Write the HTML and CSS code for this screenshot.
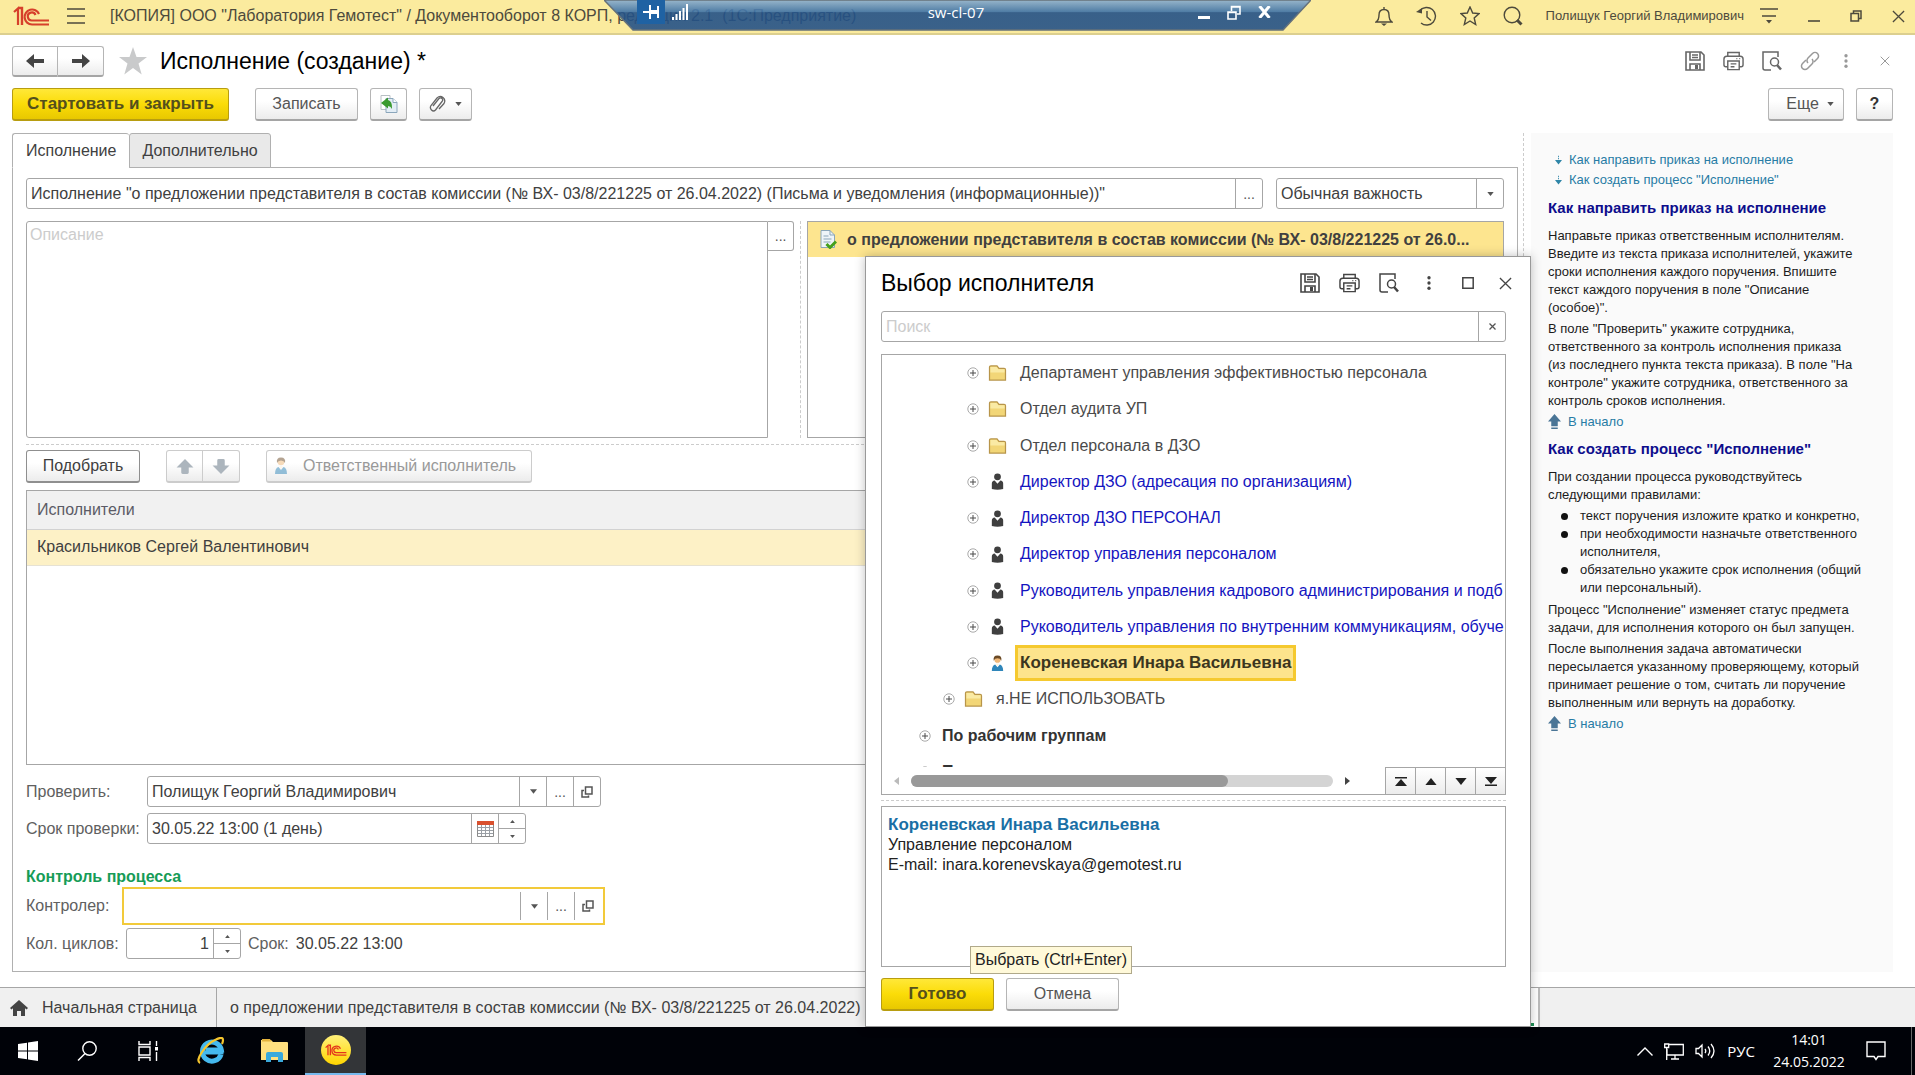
FILE: index.html
```html
<!DOCTYPE html>
<html lang="ru">
<head>
<meta charset="utf-8">
<title>Исполнение (создание)</title>
<link rel="stylesheet" href="styles.css">
</head>
<body>
<svg class="defs" aria-hidden="true">
  <symbol id="i-logo" viewBox="0 0 37 20"><g fill="none" stroke="currentColor"><path d="M1 6l4-3.500V19" stroke-width="2.200"/><path d="M6 2h3v17" stroke-width="2.400"/><path d="M26 8a7.500 7.500 0 1 0-7 10.500h17" stroke-width="2.200"/><path d="M22.500 9a4 4 0 1 0-3.500 5.500h17" stroke-width="2.200"/></g></symbol>
  <symbol id="i-save" viewBox="0 0 20 20"><g fill="none" stroke="currentColor" stroke-width="1.600"><path d="M1 1h15l3 3v15H1z"/><path d="M5 1v8h10V1M7 4h6M7 6.500h6M5 19v-6h10v6"/></g><path d="M10 14h3v4h-3z" fill="currentColor"/></symbol>
  <symbol id="i-print" viewBox="0 0 22 20"><g fill="none" stroke="currentColor" stroke-width="1.500"><path d="M5 5V1h12v4M5 16H3a2 2 0 0 1-2-2V8a3 3 0 0 1 3-3h14a3 3 0 0 1 3 3v6a2 2 0 0 1-2 2h-2"/><path d="M5 10h12v9H5zM8 13h6M8 16h4M14 7.500h1M17 7.500h1"/></g></symbol>
  <symbol id="i-preview" viewBox="0 0 20 20"><g fill="none" stroke="currentColor" stroke-width="1.500"><path d="M9 19H3a2 2 0 0 1-2-2V1h15v5"/><circle cx="12.500" cy="11" r="4"/></g><path d="M15 14l4 4.500" stroke="currentColor" stroke-width="2.500"/></symbol>
  <symbol id="i-link" viewBox="0 0 20 20"><g fill="none" stroke="currentColor" stroke-width="1.500"><path d="M8 12a3.500 3.500 0 0 1 0-5l4.500-4.500a3.500 3.500 0 0 1 5 5L14 11"/><path d="M12 8a3.500 3.500 0 0 1 0 5l-4.500 4.500a3.500 3.500 0 0 1-5-5L6 9"/></g></symbol>
  <symbol id="i-dots" viewBox="0 0 4 16"><g fill="currentColor"><circle cx="2" cy="2" r="1.900"/><circle cx="2" cy="8" r="1.900"/><circle cx="2" cy="14" r="1.900"/></g></symbol>
  <symbol id="i-x" viewBox="0 0 14 14"><path d="M1 1l12 12M13 1L1 13" fill="none" stroke="currentColor" stroke-width="1.400"/></symbol>
  <symbol id="i-down" viewBox="0 0 8 5"><path d="M0 0h8L4 5z" fill="currentColor"/></symbol>
  <symbol id="i-up" viewBox="0 0 8 5"><path d="M0 5h8L4 0z" fill="currentColor"/></symbol>
  <symbol id="i-open" viewBox="0 0 12 12"><g fill="none" stroke="currentColor" stroke-width="1.500"><path d="M4.500 1H11v7H4.500z"/><path d="M3 4.500H1V11h6.500V9.500"/></g></symbol>
  <symbol id="i-plus" viewBox="0 0 12 12"><g fill="none" stroke="currentColor"><circle cx="6" cy="6" r="5.200" stroke="#aaa"/><path d="M3 6h6M6 3v6"/></g></symbol>
  <symbol id="i-folder" viewBox="0 0 19 17"><path d="M1 16V2.500Q1 1 2.500 1H9l2 2.500h5.500Q18 3.500 18 5v11z" fill="#f2d677" stroke="#b8954a" stroke-width="1.300"/><path d="M2 8V2h6.500l2 2.500H17V8z" fill="#faeaa4"/></symbol>
  <symbol id="i-role" viewBox="0 0 14 18"><g fill="currentColor"><circle cx="7" cy="4" r="3.600"/><path d="M1 17V11q0-2.500 3-3l3 3.500 3-3.500q3 .5 3 3v6q-6 1.500-12 0z"/></g></symbol>
  <symbol id="i-person" viewBox="0 0 14 18"><circle cx="7" cy="5" r="3.300" fill="#f0b878"/><path d="M3 6Q2 .5 7 .5T11 6q-1-2.500-4-2.500T3 6z" fill="#6b4a26"/><path d="M1 17q0-6 3.500-7L7 13l2.500-3Q13 11 13 17z" fill="#2f86ba"/><path d="M5.500 9h3L7 12.500z" fill="#fff3dc"/></symbol>
  <symbol id="i-arrow" viewBox="0 0 18 14"><path d="M8 0v5h10v4H8v5L0 7z" fill="currentColor"/></symbol>
  <symbol id="i-fat" viewBox="0 0 18 16"><path d="M9 0l9 9h-5v5.500q0 1.500-1.500 1.500h-5Q5 16 5 14.500V9H0z" fill="currentColor"/></symbol>
  <symbol id="i-top" viewBox="0 0 14 17"><path d="M7 0l7 8h-3.500v5h-7V8H0zM3.500 14.500h7v1.500h-7z" fill="#4a7596"/></symbol>
  <symbol id="i-jump" viewBox="0 0 8 10"><path d="M3.500 0h1v1.500h-1zM3.500 2.500h1v1.500h-1zM0 5h8L4 10z" fill="#2f86a8"/></symbol>
</svg>

<header class="titlebar">
  <svg class="logo" width="37" height="20"><use href="#i-logo"/></svg>
  <button class="bare" aria-label="Меню"><svg width="18" height="16" viewBox="0 0 18 16"><path d="M0 1h18M0 8h18M0 15h18" stroke="currentColor" stroke-width="1.500"/></svg></button>
  <span class="app-name">[КОПИЯ] ООО "Лаборатория Гемотест" / Документооборот 8 КОРП, редакция 2.1&nbsp; (1С:Предприятие)</span>
  <div class="title-tools">
    <button class="bare" aria-label="Уведомления"><svg width="18" height="20" viewBox="0 0 18 20"><path d="M9 1v2M1 16q3-2 3-7 0-5.500 5-5.500T14 9q0 5 3 7z" fill="none" stroke="currentColor" stroke-width="1.400"/><path d="M6 17.500h6L9 20z" fill="currentColor"/></svg></button>
    <button class="bare" aria-label="История"><svg width="21" height="20" viewBox="0 0 21 20"><g fill="none" stroke="currentColor" stroke-width="1.400"><path d="M4 4.500A8.800 8.800 0 1 1 5 17M11 5v6l4 3.500"/></g><path d="M0 6l6 1.500V2z" fill="currentColor"/></svg></button>
    <button class="bare" aria-label="Избранное"><svg width="20" height="20" viewBox="0 0 20 20"><path d="M10 1l2.700 6 6.300.6-4.800 4.300 1.500 6.600-5.700-3.500-5.700 3.500 1.500-6.600L1 7.600 7.300 7z" fill="none" stroke="currentColor" stroke-width="1.400"/></svg></button>
    <button class="bare" aria-label="Поиск"><svg width="20" height="20" viewBox="0 0 20 20"><circle cx="9" cy="9" r="7.800" fill="none" stroke="currentColor" stroke-width="1.400"/><path d="M14 14l4.500 4.500" stroke="currentColor" stroke-width="3"/></svg></button>
  </div>
  <span class="user">Полищук Георгий Владимирович</span>
  <div class="window-tools">
    <button class="bare" aria-label="Сервис"><svg width="18" height="16" viewBox="0 0 18 16"><path d="M0 1h18M2 8h14" stroke="currentColor" stroke-width="1.500"/><path d="M6 12h6l-3 3.500z" fill="currentColor"/></svg></button>
    <button class="bare" aria-label="Свернуть"><svg width="12" height="12" viewBox="0 0 12 12"><path d="M0 11h12" stroke="currentColor" stroke-width="1.600"/></svg></button>
    <button class="bare" aria-label="Восстановить"><svg width="12" height="12" viewBox="0 0 12 12"><path d="M1 3.500h7.500V11H1zM3.500 3.500V1H11v7.500H8.500" fill="none" stroke="currentColor" stroke-width="1.500"/></svg></button>
    <button class="bare" aria-label="Закрыть"><svg width="13" height="13"><use href="#i-x"/></svg></button>
  </div>
</header>

<div class="remote-bar">
  <svg class="remote-shape" viewBox="0 0 707 31" preserveAspectRatio="none" aria-hidden="true">
    <defs><linearGradient id="rg" x1="0" y1="0" x2="0" y2="1"><stop offset="0" stop-color="#8db0d0"/><stop offset=".4" stop-color="#3c70a5"/><stop offset=".42" stop-color="#235187"/><stop offset="1" stop-color="#255287"/></linearGradient></defs>
    <path d="M0 0h707l-28 30H29z" fill="url(#rg)" fill-opacity=".9" stroke="#66717a" stroke-width="1.500"/>
  </svg>
  <button class="pin" aria-label="Закрепить"><svg width="16" height="14" viewBox="0 0 16 14"><path d="M0 7h6M7 0v14M15 1v12" stroke="#fff" stroke-width="2" fill="none"/><path d="M7 5h8v4H7z" fill="#fff"/></svg></button>
  <svg width="16" height="16" viewBox="0 0 16 16" aria-hidden="true"><path d="M1 13v3M4.500 10v6M8 7v9M11.500 4v12M15 0v16" stroke="#fff" stroke-width="2"/></svg>
  <span class="remote-host">sw-cl-07</span>
  <button class="bare" aria-label="Свернуть сеанс"><svg width="12" height="14" viewBox="0 0 12 14"><path d="M0 12.500h12" stroke="#fff" stroke-width="3"/></svg></button>
  <button class="bare" aria-label="Восстановить сеанс"><svg width="14" height="15" viewBox="0 0 14 15"><path d="M1 7h8v7H1zM4.500 6V1.500H13V9h-3M1 7.500h8M4.500 2H13" fill="none" stroke="#fff" stroke-width="1.600"/></svg></button>
  <button class="bare" aria-label="Закрыть сеанс"><svg width="13" height="12" viewBox="0 0 13 12"><path d="M1.500 0l10 12M11.500 0l-10 12" stroke="#fff" stroke-width="3"/></svg></button>
</div>

<main class="window">
  <div class="form-head">
    <div class="pair">
      <button class="btn" aria-label="Назад"><svg width="18" height="14"><use href="#i-arrow"/></svg></button><button class="btn" aria-label="Вперед"><svg class="flip" width="18" height="14"><use href="#i-arrow"/></svg></button>
    </div>
    <svg class="fav" width="28" height="28" viewBox="0 0 28 28"><path d="M14 0l3.500 10H28l-8.500 6.500 3.200 11L14 21l-8.700 6.500 3.200-11L0 10h10.500z" fill="#c9cacb"/></svg>
    <h1>Исполнение (создание) *</h1>
    <div class="head-tools">
      <button class="bare" aria-label="Сохранить"><svg width="20" height="20"><use href="#i-save"/></svg></button>
      <button class="bare" aria-label="Печать"><svg width="21" height="20"><use href="#i-print"/></svg></button>
      <button class="bare" aria-label="Просмотр"><svg width="20" height="20"><use href="#i-preview"/></svg></button>
      <button class="bare pale" aria-label="Ссылка"><svg width="20" height="20"><use href="#i-link"/></svg></button>
      <button class="bare pale" aria-label="Еще действия"><svg width="4" height="14"><use href="#i-dots"/></svg></button>
      <button class="bare pale" aria-label="Закрыть форму"><svg width="10" height="10"><use href="#i-x"/></svg></button>
    </div>
  </div>

  <div class="commands">
    <button class="btn primary wide-start">Стартовать и закрыть</button>
    <button class="btn save">Записать</button>
    <button class="btn square" aria-label="Создать на основании"><svg width="18" height="18" viewBox="0 0 18 18"><path d="M1 .5h9v14H1z" fill="#fff" stroke="#b8bfc4"/><path d="M6 3.500h7l4 4v10H6z" fill="#e3edf5" stroke="#8ba6bb"/><path d="M13 3.500v4h4" fill="#fff" stroke="#8ba6bb"/><path d="M1 8l7-5.500V5q4.500 1 4 9-1.500-3-4-3v2.500z" fill="#3a9a30"/></svg></button>
    <button class="btn clip" aria-label="Присоединенные файлы"><svg width="17" height="19" viewBox="0 0 17 19"><path d="M4 11l6-7.500q1.500-1.500 3 0t0 3L6.500 15q-2 2-4 0t-.5-4.500l6-7.500q3-3 6-.5t1 6L10 14" fill="none" stroke="#666" stroke-width="1.300"/></svg><svg width="7" height="4"><use href="#i-down"/></svg></button>
    <span class="spacer"></span>
    <button class="btn more">Еще <svg width="7" height="4"><use href="#i-down"/></svg></button>
    <button class="btn square help-btn">?</button>
  </div>

  <div class="columns">
    <section class="form-col">
      <div class="tabs" role="tablist">
        <button role="tab" aria-selected="true" class="tab on">Исполнение</button><button role="tab" aria-selected="false" class="tab">Дополнительно</button>
      </div>
      <div class="panel">
        <div class="row topic">
          <div class="field grow"><input aria-label="Тема" value="Исполнение &quot;о предложении представителя в состав комиссии (№ ВХ- 03/8/221225 от 26.04.2022) (Письма и уведомления (информационные))&quot;"><button aria-label="Выбрать тему">...</button></div>
          <div class="field importance"><select aria-label="Важность"><option>Обычная важность</option></select><span class="drop"><svg width="7" height="4"><use href="#i-down"/></svg></span></div>
        </div>
        <div class="details">
          <div class="descr"><textarea aria-label="Описание" placeholder="Описание"></textarea><button aria-label="Открыть описание">...</button></div>
          <div class="subjects">
            <div class="subject"><svg width="17" height="19" viewBox="0 0 17 19"><path d="M1 .5h9l4.500 4.500v12.500H1z" fill="#eef4f8" stroke="#8aa5b8"/><path d="M10 .5V5h4.500M3.500 6h5M3.500 9h8M3.500 12h7" fill="none" stroke="#8aa5b8"/><path d="M6.500 14l3.500 3.500 6-6" fill="none" stroke="#45a01c" stroke-width="3"/></svg><span>о предложении представителя в состав комиссии (№ ВХ- 03/8/221225 от 26.0...</span></div>
          </div>
        </div>
        <div class="row picks">
          <button class="btn dark">Подобрать</button>
          <div class="pair faint">
            <button class="btn" disabled aria-label="Вверх"><svg width="18" height="15"><use href="#i-fat"/></svg></button><button class="btn" disabled aria-label="Вниз"><svg class="turn" width="18" height="15"><use href="#i-fat"/></svg></button>
          </div>
          <button class="btn responsible" disabled><svg width="14" height="18"><use href="#i-person"/></svg>Ответственный исполнитель</button>
        </div>
        <div class="people">
          <table>
            <thead><tr><th>Исполнители</th></tr></thead>
            <tbody><tr><td>Красильников Сергей Валентинович</td></tr></tbody>
          </table>
        </div>
        <div class="row check">
          <label class="wide-label" for="checker">Проверить:</label>
          <div class="field person"><input id="checker" value="Полищук Георгий Владимирович"><button aria-label="Список"><svg width="7" height="5"><use href="#i-down"/></svg></button><button aria-label="Выбрать">...</button><button aria-label="Открыть"><svg width="12" height="12"><use href="#i-open"/></svg></button></div>
        </div>
        <div class="row due">
          <label class="wide-label" for="due">Срок проверки:</label>
          <div class="field date"><input id="due" value="30.05.22 13:00 (1 день)"><button aria-label="Календарь"><svg width="17" height="17" viewBox="0 0 17 17"><path d="M.5 3h16v13.500H.5z" fill="#fff" stroke="#8b8b8b"/><path d="M1 7.500h15M1 10.500h15M1 13.500h15M4.500 5v11M8.500 5v11M12.500 5v11" stroke="#9a9fa5"/><path d="M0 1h17v4H0z" fill="#d9512f"/></svg></button><span class="spin"><button aria-label="Больше"><svg width="5" height="3"><use href="#i-up"/></svg></button><button aria-label="Меньше"><svg width="5" height="3"><use href="#i-down"/></svg></button></span></div>
        </div>
        <h2>Контроль процесса</h2>
        <div class="row">
          <label class="ctrl-label" for="controller">Контролер:</label>
          <div class="field focus"><input id="controller"><button aria-label="Список"><svg width="7" height="5"><use href="#i-down"/></svg></button><button aria-label="Выбрать">...</button><button aria-label="Открыть"><svg width="12" height="12"><use href="#i-open"/></svg></button></div>
        </div>
        <div class="row cycles-row">
          <label class="cycles-label" for="cycles">Кол. циклов:</label>
          <div class="field cycles"><input id="cycles" value="1"><span class="spin"><button aria-label="Больше"><svg width="5" height="3"><use href="#i-up"/></svg></button><button aria-label="Меньше"><svg width="5" height="3"><use href="#i-down"/></svg></button></span></div>
          <span class="term">Срок:</span><span>30.05.22 13:00</span>
        </div>
      </div>
    </section>

    <aside class="help">
      <ul class="contents">
        <li><svg width="7" height="10"><use href="#i-jump"/></svg><a href="#h1">Как направить приказ на исполнение</a></li>
        <li><svg width="7" height="10"><use href="#i-jump"/></svg><a href="#h2">Как создать процесс "Исполнение"</a></li>
      </ul>
      <h3 id="h1">Как направить приказ на исполнение</h3>
      <p>Направьте приказ ответственным исполнителям.<br>Введите из текста приказа исполнителей, укажите<br>сроки исполнения каждого поручения. Впишите<br>текст каждого поручения в поле "Описание<br>(особое)".</p>
      <p>В поле "Проверить" укажите сотрудника,<br>ответственного за контроль исполнения приказа<br>(из последнего пункта текста приказа). В поле "На<br>контроле" укажите сотрудника, ответственного за<br>контроль сроков исполнения.</p>
      <p class="back"><svg width="13" height="16"><use href="#i-top"/></svg><a href="#">В начало</a></p>
      <h3 id="h2">Как создать процесс "Исполнение"</h3>
      <p>При создании процесса руководствуйтесь<br>следующими правилами:</p>
      <ul class="rules">
        <li>текст поручения изложите кратко и конкретно,</li>
        <li>при необходимости назначьте ответственного<br>исполнителя,</li>
        <li>обязательно укажите срок исполнения (общий<br>или персональный).</li>
      </ul>
      <p>Процесс "Исполнение" изменяет статус предмета<br>задачи, для исполнения которого он был запущен.</p>
      <p>После выполнения задача автоматически<br>пересылается указанному проверяющему, который<br>принимает решение о том, считать ли поручение<br>выполненным или вернуть на доработку.</p>
      <p class="back"><svg width="13" height="16"><use href="#i-top"/></svg><a href="#">В начало</a></p>
    </aside>
  </div>
</main>

<nav class="open-forms">
  <button class="home"><svg width="18" height="16" viewBox="0 0 18 16"><path d="M9 0l9 8-1.500 1.500L15 8.300V16h-4v-5H7v5H3V8.300L1.500 9.500 0 8z" fill="#444"/></svg>Начальная страница</button>
  <button class="doc">о предложении представителя в состав комиссии (№ ВХ- 03/8/221225 от 26.04.2022)</button>
  <span class="current"></span>
</nav>

<footer class="taskbar">
  <button aria-label="Пуск"><svg width="20" height="20" viewBox="0 0 20 20"><path d="M0 3l9-1.300v7.800H0zM10 1.500L20 0v9.500H10zM0 10.500h9v7.800L0 17zM10 10.500h10V20l-10-1.500z" fill="#fff"/></svg></button>
  <button aria-label="Поиск в Windows"><svg width="20" height="20" viewBox="0 0 20 20"><circle cx="12.500" cy="7.500" r="6.700" fill="none" stroke="#fff" stroke-width="1.400"/><path d="M8 12.500L1 19.500" stroke="#fff" stroke-width="1.500"/></svg></button>
  <button aria-label="Представление задач"><svg width="20" height="20" viewBox="0 0 20 20"><path d="M1 0v3.500h11V0M1 20v-3.500h11V20M1 6h11v8H1zM18.500 0v5M18.500 11v9" fill="none" stroke="#fff" stroke-width="1.400"/><path d="M17 6h3v3.500h-3z" fill="#fff"/></svg></button>
  <button class="ie" aria-label="Internet Explorer"><svg width="28" height="28" viewBox="0 0 28 28"><path d="M24 17.500A9.500 9.500 0 1 1 24.300 13H8.500" fill="none" stroke="#45b9ee" stroke-width="5"/><path d="M8 15.500h18.500" stroke="#45b9ee" stroke-width="4"/><path d="M3 26q-4-2 2-11T19 2.500q7-3.500 7 .5 0 2-1 4" fill="none" stroke="#f5c62e" stroke-width="2.200"/></svg></button>
  <button aria-label="Проводник"><svg width="27" height="24" viewBox="0 0 27 24"><path d="M0 1h10l2 2h14q1 0 1 1v17H0z" fill="#ffe07f"/><path d="M1 0h8l1.500 2.500H1z" fill="#e3b23c"/><path d="M5 23v-8q0-2 2-2h13q2 0 2 2v8h-5v-5h-7v5z" fill="#39a9dc"/></svg></button>
  <button class="active" aria-label="1С:Предприятие"><svg width="30" height="30" viewBox="0 0 30 30"><defs><linearGradient id="yg" x1="0" y1="0" x2="0" y2="1"><stop offset="0" stop-color="#fff07a"/><stop offset="1" stop-color="#ffd500"/></linearGradient></defs><circle cx="15" cy="15" r="15" fill="url(#yg)"/><svg x="4" y="9" width="22" height="12" color="#e3351c"><use href="#i-logo"/></svg></svg></button>
  <span class="spacer"></span>
  <div class="tray">
    <svg width="16" height="9" viewBox="0 0 16 9"><path d="M.5 8.500L8 1l7.500 7.500" fill="none" stroke="#fff" stroke-width="1.400"/></svg>
    <svg width="20" height="17" viewBox="0 0 20 17"><path d="M5 1.500h14.300v10.500H3V6M.7 1h4v3.500h-4zM2.700 5v12M11 12v4M7 16h8" fill="none" stroke="#fff" stroke-width="1.300"/></svg>
    <svg width="21" height="18" viewBox="0 0 21 18"><path d="M1 6.500h2.500L7 3v12L3.500 11.500H1zM10 7q1.500 2 0 4M13 4.500q3.500 4.500 0 9M16 2q6 7 0 14" fill="none" stroke="#fff" stroke-width="1.300"/></svg>
    <span class="lang">РУС</span>
  </div>
  <div class="clock"><span>14:01</span><span>24.05.2022</span></div>
  <button class="notes" aria-label="Центр уведомлений"><svg width="20" height="20" viewBox="0 0 20 20"><path d="M1 1h18v14.500h-7L10 18.500 8 15.500H1z" fill="none" stroke="#fff" stroke-width="1.400"/></svg></button>
</footer>

<section class="dialog" role="dialog" aria-labelledby="dlg-title">
  <header>
    <h1 id="dlg-title">Выбор исполнителя</h1>
    <button class="bare" aria-label="Сохранить список"><svg width="20" height="20"><use href="#i-save"/></svg></button>
    <button class="bare" aria-label="Печать списка"><svg width="21" height="20"><use href="#i-print"/></svg></button>
    <button class="bare" aria-label="Просмотр списка"><svg width="20" height="20"><use href="#i-preview"/></svg></button>
    <button class="bare" aria-label="Еще"><svg width="4" height="14"><use href="#i-dots"/></svg></button>
    <button class="bare" aria-label="Развернуть"><svg width="12" height="12" viewBox="0 0 12 12"><path d="M.8.8h10.400v10.400H.8z" fill="none" stroke="currentColor" stroke-width="1.500"/></svg></button>
    <button class="bare" aria-label="Закрыть окно"><svg width="13" height="13"><use href="#i-x"/></svg></button>
  </header>
  <div class="field search"><input placeholder="Поиск" aria-label="Поиск исполнителя"><button aria-label="Очистить"><svg width="7" height="7" viewBox="0 0 7 7"><path d="M.5.5l6 6M6.500.5l-6 6" stroke="currentColor" stroke-width="1.300"/></svg></button></div>
  <div class="tree">
    <div class="tree-view">
      <ul>
        <li class="l3"><svg width="12" height="12"><use href="#i-plus"/></svg><svg class="kind" width="19" height="16"><use href="#i-folder"/></svg><span>Департамент управления эффективностью персонала</span></li>
        <li class="l3"><svg width="12" height="12"><use href="#i-plus"/></svg><svg class="kind" width="19" height="16"><use href="#i-folder"/></svg><span>Отдел аудита УП</span></li>
        <li class="l3"><svg width="12" height="12"><use href="#i-plus"/></svg><svg class="kind" width="19" height="16"><use href="#i-folder"/></svg><span>Отдел персонала в ДЗО</span></li>
        <li class="l3 role"><svg width="12" height="12"><use href="#i-plus"/></svg><svg class="kind" width="19" height="17"><use href="#i-role"/></svg><span>Директор ДЗО (адресация по организациям)</span></li>
        <li class="l3 role"><svg width="12" height="12"><use href="#i-plus"/></svg><svg class="kind" width="19" height="17"><use href="#i-role"/></svg><span>Директор ДЗО ПЕРСОНАЛ</span></li>
        <li class="l3 role"><svg width="12" height="12"><use href="#i-plus"/></svg><svg class="kind" width="19" height="17"><use href="#i-role"/></svg><span>Директор управления персоналом</span></li>
        <li class="l3 role"><svg width="12" height="12"><use href="#i-plus"/></svg><svg class="kind" width="19" height="17"><use href="#i-role"/></svg><span>Руководитель управления кадрового администрирования и подб</span></li>
        <li class="l3 role"><svg width="12" height="12"><use href="#i-plus"/></svg><svg class="kind" width="19" height="17"><use href="#i-role"/></svg><span>Руководитель управления по внутренним коммуникациям, обуче</span></li>
        <li class="l3 picked"><svg width="12" height="12"><use href="#i-plus"/></svg><svg class="kind" width="19" height="17"><use href="#i-person"/></svg><span>Кореневская Инара Васильевна</span></li>
        <li class="l2"><svg width="12" height="12"><use href="#i-plus"/></svg><svg class="kind" width="19" height="16"><use href="#i-folder"/></svg><span>я.НЕ ИСПОЛЬЗОВАТЬ</span></li>
        <li class="l1"><svg width="12" height="12"><use href="#i-plus"/></svg><span>По рабочим группам</span></li>
        <li class="l1"><svg width="12" height="12"><use href="#i-plus"/></svg><span>По проектам</span></li>
      </ul>
    </div>
    <div class="tree-foot">
      <svg class="dim" width="5" height="8" viewBox="0 0 5 8"><path d="M5 0v8L0 4z" fill="currentColor"/></svg>
      <div class="track"><div class="thumb"></div></div>
      <svg width="5" height="8" viewBox="0 0 5 8"><path d="M0 0v8l5-4z" fill="currentColor"/></svg>
      <div class="jumps">
        <button aria-label="В начало списка"><svg width="12" height="9" viewBox="0 0 12 9"><path d="M0 0h12v1.500H0zM0 9h12L6 2z" fill="currentColor"/></svg></button><button aria-label="Страница вверх"><svg width="12" height="7"><use href="#i-up"/></svg></button><button aria-label="Страница вниз"><svg width="12" height="7"><use href="#i-down"/></svg></button><button aria-label="В конец списка"><svg width="12" height="9" viewBox="0 0 12 9"><path d="M0 7.500h12V9H0zM0 0h12L6 7z" fill="currentColor"/></svg></button>
      </div>
    </div>
  </div>
  <div class="card">
    <a href="#">Кореневская Инара Васильевна</a>
    <p>Управление персоналом</p>
    <p>E-mail: inara.korenevskaya@gemotest.ru</p>
  </div>
  <div class="dialog-actions">
    <button class="btn primary">Готово</button>
    <button class="btn">Отмена</button>
    <span class="tip" role="tooltip">Выбрать (Ctrl+Enter)</span>
  </div>
</section>
</body>
</html>
```
FILE: styles.css
```css
* { box-sizing: border-box; }
body {
  margin: 0;
  min-height: 100vh;
  position: relative;
  display: flex;
  flex-direction: column;
  font: 16px/20px "Liberation Sans", Arial, sans-serif;
  color: #404040;
  background: #fff;
}
button, input, select, textarea { font: inherit; color: inherit; margin: 0; border: 0; padding: 0; background: none; }
h1, h2, h3, p, ul { margin: 0; padding: 0; }
ul { list-style: none; }
a { color: #287ca5; text-decoration: none; }
svg { flex: none; display: block; }
.defs { position: absolute; width: 0; height: 0; }
.bare { display: flex; align-items: center; justify-content: center; }
.spacer { flex: 1; }
.flip { transform: scaleX(-1); }
.turn { transform: rotate(180deg); }

/* application title */
.titlebar {
  height: 35px;
  display: flex;
  align-items: center;
  padding: 0 10px 1px 13px;
  background: #fbeb9e;
  border-bottom: 2px solid #dccf8f;
  color: #4d4a3c;
}
.logo { color: #d6402b; margin-right: 17px; }
.app-name { margin-left: 25px; flex: 1; white-space: nowrap; overflow: hidden; }
.title-tools { display: flex; gap: 23px; margin-right: 23px; }
.user { font-size: 13px; margin-right: 16px; }
.window-tools { display: flex; align-items: center; gap: 30px; }

/* remote session bar */
.remote-bar {
  position: absolute;
  z-index: 1;
  top: 0;
  left: 50%;
  width: 707px;
  height: 31px;
  margin-left: -354px;
  padding: 0 40px 7px 33px;
  display: flex;
  align-items: center;
  gap: 17px;
  color: #fff;
}
.remote-shape { position: absolute; left: 0; top: 0; width: 100%; height: 100%; z-index: -1; }
.pin { width: 28px; height: 24px; display: flex; align-items: center; justify-content: center; background: #1f62a3; margin-right: -10px; }
.remote-host { flex: 1; padding-left: 27px; text-align: center; font: 15px/20px "Open Sans", sans-serif; }

/* buttons */
.btn {
  height: 33px;
  padding: 0 16px;
  display: flex;
  align-items: center;
  justify-content: center;
  border: 1px solid #b5b5b5;
  border-bottom: 2px solid #a5a5a5;
  border-radius: 3px;
  background: linear-gradient(#fff 40%, #ececec);
  color: #555;
  white-space: nowrap;
}
.btn.primary { background: linear-gradient(#ffe838, #fbdc08 50%, #e8c800); border-color: #b89d10; font-weight: bold; font-size: 17px; color: #54501c; }
.btn.dark { border-color: #8f8f8f; color: #404040; }
.btn:disabled { color: #999; border-color: #ccc; }
.btn.square { width: 37px; padding: 0; }
.pair { display: flex; }
.pair .btn { width: 46px; padding: 0; height: 31px; color: #444; }
.pair .btn:first-child { border-radius: 3px 0 0 3px; }
.pair .btn:last-child { border-radius: 0 3px 3px 0; border-left: 0; }
.pair.faint .btn { width: 37px; height: 33px; color: #acb5bd; }

/* main form */
.window { flex: 1; display: flex; flex-direction: column; padding: 11px 22px 15px 12px; }
.form-head { display: flex; align-items: center; height: 30px; }
.fav { margin: 0 13px 0 15px; }
.form-head h1, .dialog h1 { font-size: 23px; line-height: 28px; font-weight: normal; color: #000; flex: 1; }
.head-tools { display: flex; gap: 18px; color: #666; padding-right: 3px; }
.head-tools .pale { color: #999; }
.head-tools .pale:nth-child(5) { padding: 0 8px 0 6px; }
.head-tools .pale:nth-child(6) { padding-left: 6px; }
.commands { display: flex; margin-top: 12px; gap: 12px; }
.wide-start { width: 217px; margin-right: 14px; }
.save { width: 103px; }
.clip { width: 53px; padding: 0; gap: 9px; }
.more { width: 76px; padding: 0 8px 0 16px; gap: 8px; }
.btn.help-btn { font-weight: bold; color: #333; }
.columns { flex: 1; display: flex; margin-top: 12px; }
.form-col { flex: 1; min-width: 0; display: flex; flex-direction: column; }
.tabs { display: flex; margin-bottom: -1px; z-index: 0; position: relative; }
.tab { height: 35px; padding: 0 12px; border: 1px solid #b0b0b0; background: #e9e9e9; border-radius: 3px 3px 0 0; }
.tab.on { padding: 0 13px; background: #fff; border-bottom-color: #fff; border-right: 0; }
.panel { flex: 1; border: 1px solid #b0b0b0; padding: 10px 13px 12px; display: flex; flex-direction: column; }
.row { display: flex; align-items: center; }
.topic { gap: 13px; margin-bottom: 12px; }
.grow { flex: 1; }
.importance { width: 228px; }
.field { display: flex; height: 31px; border: 1px solid #a6a6a6; border-radius: 3px; background: #fff; }
.field input, .field select { flex: 1; min-width: 0; padding: 0 4px; appearance: none; outline: 0; }
.field input::placeholder, .descr textarea::placeholder { color: #ccc; opacity: 1; }
.field > button, .drop, .spin { width: 27px; border-left: 1px solid #a6a6a6; display: flex; align-items: center; justify-content: center; color: #555; font-size: 14px; }
.spin { flex-direction: column; }
.spin button { flex: 1; width: 100%; display: flex; align-items: center; justify-content: center; }
.spin button + button { border-top: 1px solid #a6a6a6; }

.details { display: flex; height: 217px; }
.descr { flex: 766; display: flex; align-items: flex-start; padding-right: 6px; margin-right: 6px; border-right: 1px dashed #ccc; }
.descr textarea { flex: 1; height: 217px; padding: 3px; border: 1px solid #a6a6a6; border-radius: 3px 0 0 3px; resize: none; }
.descr button { width: 26px; height: 30px; border: 1px solid #a6a6a6; border-left: 0; border-radius: 0 3px 3px 0; font-size: 14px; color: #555; }
.subjects { flex: 693; min-width: 0; border: 1px solid #a6a6a6; }
.subject { display: flex; align-items: center; gap: 10px; height: 35px; padding: 0 8px 0 12px; background: #fde58f; font-weight: bold; white-space: nowrap; }
.picks { margin-top: 6px; padding-top: 5px; border-top: 1px dashed #ccc; gap: 26px; }
.picks .dark { width: 114px; padding: 0; }
.responsible { width: 266px; padding: 0 0 0 7px; gap: 15px; justify-content: flex-start; }
.responsible svg { opacity: .5; }
.people { flex: 1; margin-top: 7px; border: 1px solid #a6a6a6; }
.people table { width: 100%; border-collapse: collapse; }
.people th, .people td { text-align: left; font-weight: normal; padding: 0 10px; border-bottom: 1px solid #d2d2d2; }
.people th { height: 38px; background: #f1f1f1; color: #5b5b66; }
.people td { height: 36px; background: #fdf1c6; border-color: #e6e2d4; }
.check { margin-top: 11px; }
.due { margin-top: 6px; }
.row label, .term { color: #606060; }
.wide-label { width: 121px; }
.person { width: 454px; }
.date { width: 379px; }
.panel h2 { font-size: 16px; line-height: 20px; color: #169c57; margin-top: 23px; }
.ctrl-label { width: 96px; }
.focus { width: 483px; height: 38px; border: 2px solid #f2ca3a; border-radius: 0; padding: 3px 2px; }
.cycles-row { margin-top: 3px; }
.cycles-label { width: 100px; }
.cycles { width: 115px; }
.cycles input { text-align: right; }
.term { margin: 0 7px; }

/* help pane */
.help {
  width: 370px;
  margin-left: 5px;
  padding: 17px 8px 0 17px;
  border-left: 1px dashed #ccc;
  background: linear-gradient(#fafafa, #fafafa) right / 362px 100% no-repeat;
  font-size: 13px;
  line-height: 18px;
  color: #1c1c1c;
  white-space: nowrap;
}
.contents li { display: flex; align-items: center; gap: 7px; height: 20px; padding-left: 7px; }
.help h3 { font-size: 15px; line-height: 18px; color: #0d0d8c; margin: 9px 0 10px 7px; }
.help p { margin: 0 0 3px 7px; padding: 0; }
.help .contents { margin-left: 7px; }
.back { display: flex; align-items: center; gap: 7px; }
.rules { margin: 0 0 4px 39px; }
.rules li::before { content: ""; display: inline-block; width: 7px; height: 7px; margin: 0 12px 0 -19px; border-radius: 50%; background: #111; }

/* open form tabs */
.open-forms { height: 40px; display: flex; background: #f0f0f0; border-top: 1px solid #a6a6a6; }
.home { width: 217px; display: flex; align-items: center; gap: 14px; padding-left: 10px; border-right: 1px solid #a6a6a6; }
.doc { width: 664px; text-align: left; padding-left: 13px; overflow: hidden; white-space: nowrap; }
.current { width: 659px; padding: 0 4px 1px; border-right: 2px solid #bbb; background: #fff; display: flex; align-items: flex-end; }
.current::after { content: ""; flex: 1; height: 3px; background: #1f8f55; }

/* taskbar */
.taskbar { height: 48px; display: flex; background: #000208; color: #fff; font-family: "Open Sans", sans-serif; }
.taskbar button { width: 61px; display: flex; align-items: center; justify-content: center; }
.taskbar button:first-child { width: 56px; }
.taskbar .ie { width: 66px; }
.taskbar .active { background: #333538; border-bottom: 2px solid #76b9ed; }
.tray { display: flex; align-items: center; gap: 11px; }
.lang { font-size: 15px; }
.clock { width: 90px; margin-left: 9px; padding-top: 2px; display: flex; flex-direction: column; text-align: center; font-size: 14px; line-height: 22px; }
.taskbar .notes { width: 58px; border-right: 1px solid #666; margin-right: 3px; padding: 0 25px 0 12px; }

/* performer dialog */
.dialog {
  position: absolute;
  right: 384px;
  bottom: 48px;
  width: 666px;
  height: 771px;
  padding: 0 24px 15px 15px;
  display: flex;
  flex-direction: column;
  background: #fff;
  border: 1px solid #999;
  box-shadow: 0 0 10px rgba(0, 0, 0, .25);
}
.dialog header { display: flex; align-items: center; height: 54px; padding-bottom: 2px; gap: 19px; margin-right: -6px; color: #444; }
.dialog header .bare:nth-of-type(4) { padding: 0 8px 0 9px; }
.dialog header .bare:nth-of-type(5) { padding: 0 6px 0 4px; }
.search { margin-bottom: 12px; }
.tree { height: 441px; border: 1px solid #a6a6a6; display: flex; flex-direction: column; }
.tree-view { flex: 1; min-height: 0; overflow: hidden; }
.tree-view ul { height: 435px; display: grid; grid-template-rows: repeat(12, 1fr); }
.tree-view li { display: flex; align-items: center; white-space: nowrap; color: #4a4a4a; }
.tree-view .kind { margin: 0 6px 0 9px; }
.tree-view li span { padding: 0 7px; }
.tree-view .role span { padding-right: 0; color: #1414c0; }
.l3 { padding-left: 85px; }
.l2 { padding-left: 61px; }
.l1 { padding-left: 37px; font-weight: bold; }
.tree-view .l1 span { padding-left: 11px; color: #333; }
.tree-view .role .kind { color: #3f3f3f; }
.tree-view .picked span { font-weight: bold; font-size: 17px; color: #3b3620; background: #fde48c; border: 3px solid #f5c92f; padding: 0 2px; margin-left: 2px; height: 36px; line-height: 30px; }
.tree-foot { height: 27px; display: flex; align-items: center; padding-left: 12px; color: #444; }
.tree-foot .dim { color: #bbb; }
.track { flex: 1; height: 12px; border-radius: 6px; background: #d4d4d4; margin: 0 12px 0 12px; }
.thumb { width: 75%; height: 12px; border-radius: 6px; background: #999; }
.jumps { display: flex; height: 27px; margin-left: 35px; border-top: 1px solid #a6a6a6; }
.jumps button { width: 30px; border-left: 1px solid #a6a6a6; display: flex; align-items: center; justify-content: center; color: #222; background: linear-gradient(#fff, #ececec); }
.card { flex: 1; margin-top: 11px; border: 1px solid #a6a6a6; padding: 7px 6px; color: #222; }
.card::before { content: ""; display: block; border-top: 1px dashed #ccc; margin: -14px -7px 14px; }
.card a { font-weight: bold; font-size: 17px; color: #1a6fa5; }
.dialog-actions { display: flex; gap: 12px; margin-top: 11px; position: relative; }
.dialog-actions .btn { width: 113px; }
.tip { position: absolute; left: 89px; bottom: 37px; padding: 3px 4px; border: 1px solid #b0a98a; background: #fff9d9; color: #222; white-space: nowrap; }
```
